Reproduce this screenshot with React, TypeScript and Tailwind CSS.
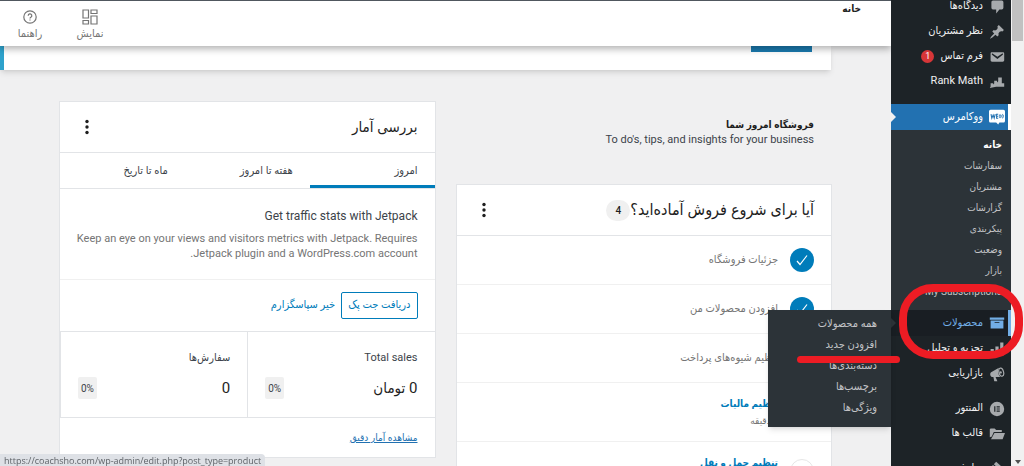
import type { ReactNode } from "react";

function Icon({ children, size = 16 }: { children: ReactNode; size?: number }) {
  return (
    <svg
      width={size}
      height={size}
      viewBox="0 0 20 20"
      fill="currentColor"
      aria-hidden="true"
      className="shrink-0"
    >
      {children}
    </svg>
  );
}

const icons = {
  comments: (
    <path d="M5 2h11c1.1 0 2 .9 2 2v7c0 1.1-.9 2-2 2h-3l-4 5v-5H5c-1.1 0-2-.9-2-2V4c0-1.1.9-2 2-2z" />
  ),
  pin: (
    <path d="M10.44 3.02l1.82-1.82 6.36 6.35-1.83 1.82c-1.05-.68-2.48-.57-3.41.36l-.75.75c-.92.93-1.04 2.35-.35 3.41l-1.83 1.82-2.41-2.41-2.8 2.79c-.42.42-3.38 2.71-3.8 2.29s1.86-3.39 2.28-3.81l2.79-2.79L4.1 9.36l1.83-1.82c1.05.69 2.48.57 3.4-.36l.75-.75c.93-.92 1.05-2.35.36-3.41z" />
  ),
  mail: (
    <path d="M3.87 4h13.25C18.37 4 19 4.59 19 5.79v8.42c0 1.19-.63 1.79-1.88 1.79H3.87c-1.25 0-1.88-.6-1.88-1.79V5.79c0-1.2.63-1.79 1.88-1.79zm6.62 8.6l6.74-5.53c.24-.2.43-.66.13-1.07-.29-.41-.82-.42-1.17-.17l-5.7 3.86L4.8 5.83c-.35-.25-.88-.24-1.17.17-.3.41-.11.87.13 1.07z" />
  ),
  rank: (
    <path d="M2 11.5h3.200v1.500l1.300-1.200V8.500h3.500v2l1.500-1.500V4.500H16v7h3v4.500H9l-8 1.500 1-2z" />
  ),
  woo: (
    <>
      <path d="M2 1h16c1.100 0 2 .9 2 2v12c0 1.100-.9 2-2 2h-5l-1.500 2.500L9 17H2c-1.100 0-2-.9-2-2V3c0-1.100.9-2 2-2z" />
      <path
        d="M2.500 6.500l1 5 1.700-4L6.500 11.500l1.300-5M11.500 6.500H9.500v5h2M9.800 9h1.500"
        fill="none"
        stroke="#2271b1"
        strokeWidth="1.300"
      />
      <ellipse cx="13.800" cy="9" rx="1" ry="2.200" fill="none" stroke="#2271b1" />
      <ellipse cx="17" cy="9" rx="1" ry="2.200" fill="none" stroke="#2271b1" />
    </>
  ),
  archive: <path d="M19 3v3H1V3h18zM2 7h16v10H2V7zm11 3V9H7v1h6z" />,
  bars: <path d="M18 18V2h-4v16h4zm-6 0V7H8v11h4zm-6 0v-8H2v8h4z" />,
  megaphone: (
    <>
      <path d="M12.500 2.200L3.200 7.600c-1.500.7-2 2.200-1.500 3.900.4 1.300 1.400 2.200 2.600 2.200h1.200l1 5c0 .3.200.5.500.5h2.900c.4 0 .6-.2.500-.5l-2.200-5h6c-2.600-2.200-3.800-8.100-1.700-11.500z" />
      <ellipse
        cx="15.300"
        cy="7.700"
        rx="2.900"
        ry="5.200"
        fill="none"
        stroke="currentColor"
        strokeWidth="1.500"
        transform="rotate(-14 15.300 7.700)"
      />
      <circle cx="14.500" cy="8" r="1.500" />
    </>
  ),
  elementor: (
    <path
      fillRule="evenodd"
      d="M10 1a9 9 0 1 1 0 18 9 9 0 0 1 0-18zM6.500 6.500v7H8v-7zm3 0V8h4V6.500zm0 2.800v1.400h4V9.300zm0 2.700v1.500h4V12z"
    />
  ),
  folder: (
    <path d="M2 3h5l2 2h7v2.500H6L3.500 13 1 14V4zM6.800 8.700H20L17 16.500H2.500z" />
  ),
  brush: (
    <path d="M9 1l9 8-3 3-9-8zM5 5l9 8-2.500 2.500L2 8z" />
  ),
};

type MenuItem = { label: string; icon: keyof typeof icons; badge?: string };

const topMenu: MenuItem[] = [
  { label: "دیدگاه‌ها", icon: "comments" },
  { label: "نظر مشتریان", icon: "pin" },
  { label: "فرم تماس", icon: "mail", badge: "1" },
  { label: "Rank Math", icon: "rank" },
];

const wooMenu = [
  "خانه",
  "سفارشات",
  "مشتریان",
  "گزارشات",
  "پیکربندی",
  "وضعیت",
  "بازار",
  "My Subscriptions",
];

const productMenu = [
  "همه محصولات",
  "افزودن جدید",
  "دسته‌بندی‌ها",
  "برچسب‌ها",
  "ویژگی‌ها",
];

const tasks = [
  { label: "جزئیات فروشگاه", done: true },
  { label: "افزودن محصولات من", done: true },
  { label: "تنظیم شیوه‌های پرداخت", done: true },
  { label: "تنظیم مالیات", done: false, time: "۱ دقیقه" },
  { label: "تنظیم حمل و نقل", done: false, time: "۱ دقیقه" },
];

const stats = [
  { label: "Total sales", value: "0 تومان" },
  { label: "سفارش‌ها", value: "0" },
];

function MenuLink({ item }: { item: MenuItem }) {
  return (
    <a
      href="#"
      className="flex items-center gap-1.5 h-[25px] pr-1.5 text-[11px] text-[#f0f0f1]"
    >
      <span className="text-[#a7aaad]">
        <Icon>{icons[item.icon]}</Icon>
      </span>
      {item.label}
      {item.badge && (
        <span className="flex items-center justify-center size-[13px] rounded-full bg-[#d63638] text-[9px] text-white">
          {item.badge}
        </span>
      )}
    </a>
  );
}

function ProductsItem() {
  return (
    <li className="relative">
      <a
        href="#"
        className="flex items-center gap-1.5 h-[26px] pr-[3px] border-r-3 border-[#72aee6] bg-[#191e23] text-[11px] text-[#72aee6]"
      >
        <Icon>{icons.archive}</Icon>
        محصولات
      </a>
      <span className="absolute left-0 top-2 border-y-5 border-l-5 border-y-transparent border-l-[#2c3338]" />
      <ul className="absolute right-full top-0 z-20 w-[123px] pt-1 pb-2 bg-[#2c3338] shadow-md">
        {productMenu.map((label) => (
          <li key={label}>
            <a
              href="#"
              className="flex items-center h-[21px] pr-3.5 text-[11px] text-[#c3c4c7]"
            >
              {label}
            </a>
          </li>
        ))}
      </ul>
      <span className="absolute left-2 -right-3 -top-[26px] z-30 h-[75px] rounded-[34px] border-8 border-[#ed1c24]" />
      <span className="absolute right-[111px] top-[46px] z-30 w-[103px] h-[7px] rounded-full bg-[#ed1c24]" />
    </li>
  );
}

function Sidebar() {
  return (
    <nav className="relative z-20 w-[120px] shrink-0 bg-[#1d2327]">
      <ul className="-mt-1.5">
        {topMenu.map((item) => (
          <li key={item.label}>
            <MenuLink item={item} />
          </li>
        ))}
        <li className="mt-2.5">
          <a
            href="#"
            className="relative flex items-center gap-1.5 h-[26px] pr-[3px] border-r-3 border-white bg-[#2271b1] text-[11px] text-white"
          >
            <Icon>{icons.woo}</Icon>
            ووکامرس
            <span className="absolute left-0 top-2 border-y-5 border-l-5 border-y-transparent border-l-[#f0f0f1]" />
          </a>
          <ul className="bg-[#2c3338] pt-1 pb-2">
            {wooMenu.map((label, i) => (
              <li key={label}>
                <a
                  href="#"
                  className={
                    i === 0
                      ? "flex items-center h-[21px] pr-[9px] text-[10px] font-bold text-white"
                      : "flex items-center h-[21px] pr-[9px] text-[10px] text-[#c3c4c7]"
                  }
                >
                  {label}
                </a>
              </li>
            ))}
          </ul>
        </li>
        <ProductsItem />
        <li>
          <MenuLink item={{ label: "تجزیه و تحلیل", icon: "bars" }} />
        </li>
        <li>
          <MenuLink item={{ label: "بازاریابی", icon: "megaphone" }} />
        </li>
        <li className="mt-2.5">
          <MenuLink item={{ label: "المنتور", icon: "elementor" }} />
        </li>
        <li>
          <MenuLink item={{ label: "قالب ها", icon: "folder" }} />
        </li>
        <li className="mt-2.5">
          <MenuLink item={{ label: "نمایش", icon: "brush" }} />
        </li>
      </ul>
    </nav>
  );
}

function Header() {
  return (
    <header className="relative z-10 flex justify-between h-[46px] bg-white border-t border-[#50575e] shadow-[0_3px_7px_rgba(0,0,0,0.3)]">
      <h1 className="pr-[30px] text-[10px] leading-4 font-bold text-[#1e1e1e]">
        خانه
      </h1>
      <div className="flex text-[11px] text-[#757575]">
        <button className="flex flex-col items-center w-[60px] pt-2">
          <svg width="16" height="16" viewBox="0 0 16 16" fill="none" stroke="currentColor" strokeWidth="1.200" aria-hidden="true">
            <path d="M1 1h5.500v8H1zM9 1h6v3.500H9zM9 7h6v8H9zM1 11.500h5.500V15H1z" />
          </svg>
          <span className="leading-[17px]">نمایش</span>
        </button>
        <button className="flex flex-col items-center w-[60px] pt-2">
          <svg width="16" height="16" viewBox="0 0 16 16" fill="none" stroke="currentColor" strokeWidth="1.200" aria-hidden="true">
            <circle cx="8" cy="8" r="6.200" />
            <path d="M6.200 6.700a1.800 1.800 0 1 1 2.700 1.500c-.6.400-.9.600-.9 1.300M8 10.400v1.200" />
          </svg>
          <span className="leading-[17px]">راهنما</span>
        </button>
      </div>
    </header>
  );
}

function MoreButton() {
  return (
    <button aria-label="گزینه‌ها" className="w-5 flex justify-center text-[#1e1e1e]">
      <svg width="4" height="16" viewBox="0 0 4 16" fill="currentColor" aria-hidden="true">
        <circle cx="2" cy="2.500" r="1.700" />
        <circle cx="2" cy="8" r="1.700" />
        <circle cx="2" cy="13.500" r="1.700" />
      </svg>
    </button>
  );
}

function TaskCard() {
  return (
    <section className="bg-white border border-[#e2e4e7]">
      <div className="flex items-center justify-between h-[51px] px-[17px] border-b border-[#e2e4e7]">
        <h3 className="flex items-center text-[16px] text-[#1e1e1e]">
          آیا برای شروع فروش آماده‌اید؟
          <span className="flex items-center justify-center w-6 h-[21px] rounded-full bg-[#f0f0f0] text-[10px] font-medium">
            4
          </span>
        </h3>
        <MoreButton />
      </div>
      <ul>
        {tasks.map((task) => (
          <li
            key={task.label}
            className="flex items-center gap-3 px-[17px] py-3 border-b border-[#f0f0f0]"
          >
            {task.done ? (
              <span className="flex items-center justify-center size-6 rounded-full bg-[#007cba] text-white">
                <svg width="14" height="14" viewBox="0 0 14 14" fill="none" stroke="currentColor" strokeWidth="1.200" aria-hidden="true">
                  <path d="M2 8l3 3.500L12 2.500" />
                </svg>
              </span>
            ) : (
              <span className="size-6 rounded-full border border-[#e6e6e6]" />
            )}
            {task.done ? (
              <a href="#" className="text-[11px] text-[#757575]">
                {task.label}
              </a>
            ) : (
              <div className="text-[10px] leading-[17px] text-[#757575]">
                <a href="#" className="font-bold text-[#007cba]">
                  {task.label}
                </a>
                <p>{task.time}</p>
              </div>
            )}
          </li>
        ))}
      </ul>
    </section>
  );
}

function StatsCard() {
  return (
    <section className="bg-white border border-[#e2e4e7]">
      <div className="flex items-center justify-between h-[51px] px-[17px] border-b border-[#e2e4e7]">
        <h3 className="text-[15px] text-[#1e1e1e]">بررسی آمار</h3>
        <MoreButton />
      </div>
      <div className="flex h-9 border-b border-[#e2e4e7] text-[11px] text-[#3c434a]">
        <button className="flex-1 px-[17px] pt-1 text-right border-b-3 border-[#007cba]">
          امروز
        </button>
        <button className="flex-1 px-[17px] pt-1 text-right border-b-3 border-transparent">
          هفته تا امروز
        </button>
        <button className="flex-1 px-[17px] pt-1 text-right border-b-3 border-transparent">
          ماه تا تاریخ
        </button>
      </div>
      <div className="pr-[17px] pl-3 pt-[18px] pb-[18px] border-b border-[#f0f0f0]">
        <h4 className="text-[12px] leading-[18px] text-[#3c434a]">
          Get traffic stats with Jetpack
        </h4>
        <p className="mt-1.5 text-[11px] leading-[15px] text-[#757575]">
          Keep an eye on your views and visitors metrics with Jetpack. Requires
          Jetpack plugin and a WordPress.com account.
        </p>
      </div>
      <div className="flex items-center gap-1.5 px-[17px] py-3 border-b border-[#e2e4e7] text-[11px] text-[#007cba]">
        <button className="h-[27px] px-1.5 border border-[#007cba] rounded-xs">
          دریافت جت پک
        </button>
        <button>خیر سپاسگزارم</button>
      </div>
      <div className="flex border-b border-[#e2e4e7]">
        {stats.map((stat) => (
          <div
            key={stat.label}
            className="flex-1 px-[17px] pt-[17px] pb-[18px] border-l border-[#e2e4e7]"
          >
            <p className="text-[11px] leading-[18px] text-[#3c434a]">
              {stat.label}
            </p>
            <div className="flex items-center justify-between mt-2.5">
              <span className="text-[15px] leading-[22px] text-[#1e1e1e]">
                {stat.value}
              </span>
              <span className="flex items-center h-[22px] px-[3px] rounded-xs bg-[#f0f0f0] text-[10px] text-[#3c434a]">
                0%
              </span>
            </div>
          </div>
        ))}
      </div>
      <div className="flex items-center h-[39px] px-[17px]">
        <a href="#" className="text-[10px] text-[#2271b1] underline">
          مشاهده آمار دقیق
        </a>
      </div>
    </section>
  );
}

export default function App() {
  return (
    <div
      dir="rtl"
      className="flex h-screen overflow-hidden bg-[#f0f0f1] font-[Roboto,'DejaVu_Sans_Condensed','DejaVu_Sans',sans-serif]"
    >
      <div className="flex flex-col justify-between items-center w-[13px] shrink-0 bg-[#f1f1f1]">
        <div className="w-[11px] h-[41px] bg-[#c1c1c1]" />
        <span className="mb-0.5 border-x-3 border-t-4 border-x-transparent border-t-[#505050]" />
      </div>
      <Sidebar />
      <main className="flex-1 min-w-0">
        <Header />
        <div className="mr-[60px] h-6 pr-[19px] border-l-4 border-[#2ea2cc] bg-white shadow-md">
          <div className="w-[61px] h-1.5 bg-[#1a7bb0]" />
        </div>
        <div className="flex items-start gap-5 px-[59px] pt-[31px]">
          <div className="flex-1">
            <div className="pr-[18px] pt-4 pb-[37px]">
              <h2 className="text-[10px] leading-4 font-bold text-[#1e1e1e]">
                فروشگاه امروز شما
              </h2>
              <p className="text-[11px] leading-[14px] text-[#3c434a]">
                To do's, tips, and insights for your business
              </p>
            </div>
            <TaskCard />
          </div>
          <div className="flex-1">
            <StatsCard />
          </div>
        </div>
      </main>
      <div
        dir="ltr"
        className="fixed left-0 bottom-0 z-30 h-3 px-1 overflow-hidden rounded-tr-sm bg-[#dee1e6] font-['Open_Sans',sans-serif] text-[9px] leading-[14px] text-[#5f6368]"
      >
        https://coachsho.com/wp-admin/edit.php?post_type=product
      </div>
    </div>
  );
}
